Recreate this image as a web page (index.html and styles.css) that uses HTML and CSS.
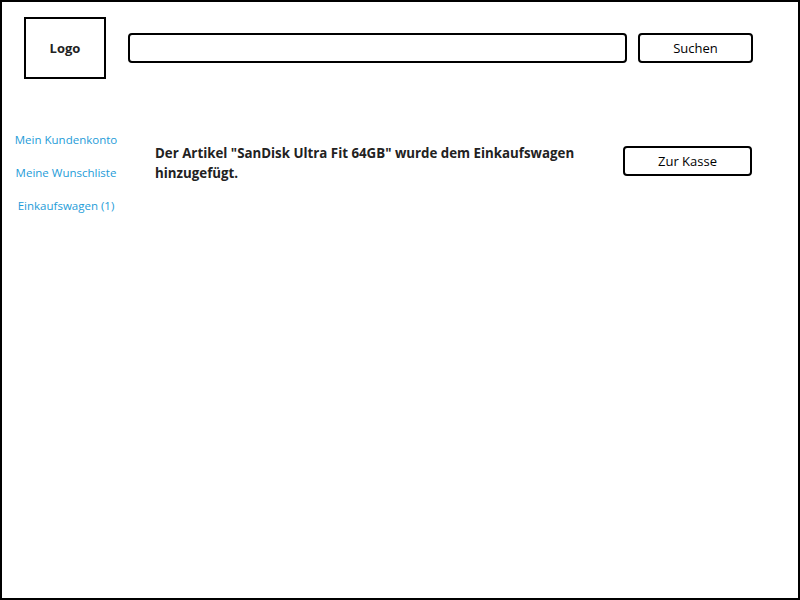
FILE: index.html
```html
<!DOCTYPE html>
<html lang="de">
<head>
<meta charset="utf-8">
<title>Warenkorb</title>
<link rel="stylesheet" href="styles.css">
</head>
<body>
<div class="page">
  <header class="header">
    <div class="logo">Logo</div>
    <input class="search" type="text" aria-label="Suche">
    <button class="btn btn-search">Suchen</button>
  </header>
  <div class="main">
    <nav class="sidebar">
      <a class="nav-link" href="#">Mein Kundenkonto</a>
      <a class="nav-link" href="#">Meine Wunschliste</a>
      <a class="nav-link" href="#">Einkaufswagen (1)</a>
    </nav>
    <section class="content">
      <p class="message">Der Artikel "SanDisk Ultra Fit 64GB" wurde dem Einkaufswagen hinzugefügt.</p>
      <button class="btn btn-checkout">Zur Kasse</button>
    </section>
  </div>
</div>
</body>
</html>
```
FILE: styles.css
```css
* { box-sizing: border-box; }
html, body { margin: 0; padding: 0; background: #fff; }
body { font-family: "Open Sans", "Noto Sans", sans-serif; color: #000; }
.page {
  width: 800px;
  height: 600px;
  border: 2px solid #000;
}
.header {
  display: flex;
  align-items: center;
  padding: 15px 0 0 22px;
}
.logo {
  width: 82px;
  height: 62px;
  border: 2px solid #000;
  display: flex;
  align-items: center;
  justify-content: center;
  font-weight: 700;
  font-size: 13px;
  color: #222;
}
.search {
  margin-left: 22px;
  width: 499px;
  height: 30px;
  border: 2px solid #000;
  border-radius: 4px;
  outline: none;
  background: #fff;
}
.btn {
  height: 30px;
  border: 2px solid #000;
  border-radius: 4px;
  background: #fff;
  font-family: "Open Sans", "Noto Sans", sans-serif;
  font-size: 13px;
  color: #000;
  padding: 0;
}
.btn-search { margin-left: 11px; width: 115px; }
.main {
  display: flex;
  margin-top: 52px;
}
.sidebar {
  width: 128px;
  display: flex;
  flex-direction: column;
  align-items: center;
  gap: 15px;
}
.nav-link {
  color: #1e9cd8;
  text-decoration: none;
  font-size: 11.5px;
  line-height: 18px;
}
.content {
  flex: 1;
  display: flex;
  justify-content: space-between;
  align-items: flex-start;
  padding: 12px 46px 0 25px;
}
.message {
  margin: 0;
  width: 440px;
  font-weight: 700;
  font-size: 13.3px;
  line-height: 20px;
  color: #222;
}
.btn-checkout { width: 129px; margin-top: 3px; }
```
